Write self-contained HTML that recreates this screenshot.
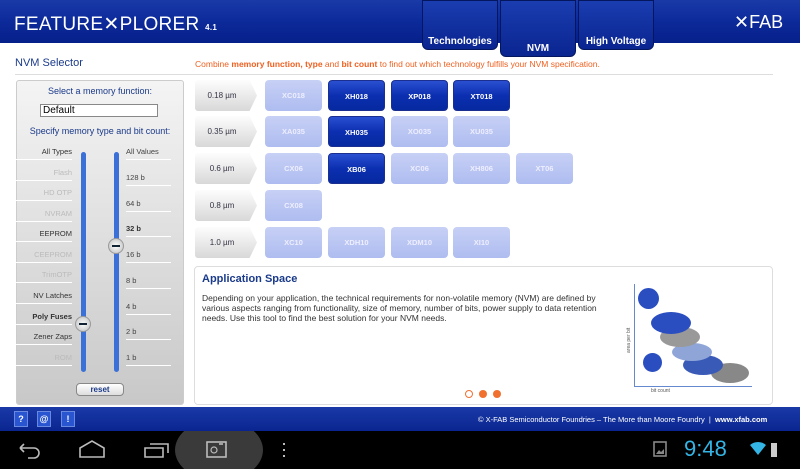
<!DOCTYPE html>
<html><head><style>
*{margin:0;padding:0;box-sizing:border-box}
body{width:800px;height:469px;overflow:hidden;background:#fff;font-family:"Liberation Sans",sans-serif;position:relative}
.a{position:absolute}
.hdr{left:0;top:0;width:800px;height:43px;background:linear-gradient(#1a3aa8,#0d2a9a 50%,#06208a)}
.tab{top:0;height:50px;background:linear-gradient(#1a3db0,#0a2590);border-radius:0 0 6px 6px;color:#fff;font-weight:bold;font-size:10px;text-align:center;border:1px solid #04175e}
.chip{width:57px;height:31px;border-radius:4px;color:#fff;font-size:7.5px;font-weight:bold;text-align:center;line-height:31px}
.d{background:linear-gradient(#2a4fd0,#0b2fb0 50%,#0629a0);border:1px solid #1a2f90}
.l{background:linear-gradient(#c7d0f5,#aebcf0);color:#eef}
.lbl{left:195px;width:62px;height:31px;font-size:8px;color:#334;line-height:31px;text-align:center;padding-right:8px;background:linear-gradient(#fdfdfd,#d8d8d8);clip-path:polygon(0 0,88% 0,100% 50%,88% 100%,0 100%);border-radius:3px}
.tl{font-size:7.5px;text-align:right;width:58px;left:14px;border-bottom:1px solid #fff;padding-bottom:3px}
.tr{font-size:7.5px;left:126px;width:45px;border-bottom:1px solid #fff;padding-bottom:3px;color:#444}
.g{color:#bbb}.k{color:#333}
.btn{top:411px;width:14px;height:16px;background:#2a55d0;border:1px solid #6a8ae0;color:#fff;font-size:9px;font-weight:bold;text-align:center;line-height:14px}
</style></head><body>
<div class="a hdr"></div>
<div class="a" style="left:14px;top:13px;color:#fff;font-size:19px;letter-spacing:0.3px">FEATURE<span>✕</span>PLORER <span style="font-size:8px;font-weight:bold">4.1</span></div>
<div class="a tab" style="left:422px;width:76px;padding-top:35px">Technologies</div>
<div class="a tab" style="left:500px;width:76px;height:57px;padding-top:42px">NVM</div>
<div class="a tab" style="left:578px;width:76px;padding-top:35px">High Voltage</div>
<div class="a" style="left:734px;top:12px;color:#fff;font-size:18px">✕FAB</div>
<div class="a" style="left:15px;top:57px;color:#1a3a8a;font-size:11px">NVM Selector</div>
<div class="a" style="left:195px;top:59px;color:#f06020;font-size:8.5px">Combine <b>memory function, type</b> and <b>bit count</b> to find out which technology fulfills your NVM specification.</div>
<div class="a" style="left:15px;top:74px;width:370px;height:1px;background:#ddd"></div>
<div class="a" style="left:195px;top:74px;width:578px;height:1px;background:#ddd"></div>
<div class="a" style="left:16px;top:80px;width:168px;height:325px;background:linear-gradient(#f4f4f4,#c8c8c8);border:1px solid #ccc;border-radius:3px"></div>
<div class="a" style="left:16px;top:86px;width:168px;text-align:center;font-size:9px;color:#1a3a8a">Select a memory function:</div>
<div class="a" style="left:40px;top:104px;width:118px;height:13px;background:#fff;border:1px solid #888;font-size:10px;padding-left:2px;line-height:12px">Default</div>
<div class="a" style="left:16px;top:126px;width:168px;text-align:center;font-size:9px;color:#1a3a8a">Specify memory type and bit count:</div>
<div class="a tl k" style="top:147px">All Types</div>
<div class="a tl g" style="top:168px">Flash</div>
<div class="a tl g" style="top:188px">HD OTP</div>
<div class="a tl g" style="top:209px">NVRAM</div>
<div class="a tl k" style="top:229px">EEPROM</div>
<div class="a tl g" style="top:250px">CEEPROM</div>
<div class="a tl g" style="top:270px">TrimOTP</div>
<div class="a tl k" style="top:291px">NV Latches</div>
<div class="a tl k" style="top:312px;font-weight:bold">Poly Fuses</div>
<div class="a tl k" style="top:332px">Zener Zaps</div>
<div class="a tl g" style="top:353px">ROM</div>
<div class="a tr" style="top:147px">All Values</div>
<div class="a tr" style="top:173px">128 b</div>
<div class="a tr" style="top:199px">64 b</div>
<div class="a tr" style="top:224px;font-weight:bold;color:#333">32 b</div>
<div class="a tr" style="top:250px">16 b</div>
<div class="a tr" style="top:276px">8 b</div>
<div class="a tr" style="top:302px">4 b</div>
<div class="a tr" style="top:327px">2 b</div>
<div class="a tr" style="top:353px">1 b</div>
<div class="a" style="left:81px;top:152px;width:5px;height:220px;background:#3a70d8;border-radius:3px"></div>
<div class="a" style="left:114px;top:152px;width:5px;height:220px;background:#3a70d8;border-radius:3px"></div>
<div class="a" style="left:75px;top:316px;width:16px;height:16px;border-radius:50%;background:radial-gradient(#fff,#bbb);border:1px solid #999"><div style="margin:6px 3px;height:2px;background:#123"></div></div>
<div class="a" style="left:108px;top:238px;width:16px;height:16px;border-radius:50%;background:radial-gradient(#fff,#bbb);border:1px solid #999"><div style="margin:6px 3px;height:2px;background:#123"></div></div>
<div class="a" style="left:76px;top:383px;width:48px;height:13px;border:1px solid #888;border-radius:4px;background:linear-gradient(#fff,#ddd);color:#1a3a8a;font-size:8px;font-weight:bold;text-align:center;line-height:11px">reset</div>

<div class="a lbl" style="top:80px">0.18 µm</div>
<div class="a lbl" style="top:116px">0.35 µm</div>
<div class="a lbl" style="top:153px">0.6 µm</div>
<div class="a lbl" style="top:190px">0.8 µm</div>
<div class="a lbl" style="top:227px">1.0 µm</div>

<div class="a chip l" style="left:265px;top:80px">XC018</div>
<div class="a chip d" style="left:328px;top:80px">XH018</div>
<div class="a chip d" style="left:391px;top:80px">XP018</div>
<div class="a chip d" style="left:453px;top:80px">XT018</div>
<div class="a chip l" style="left:265px;top:116px">XA035</div>
<div class="a chip d" style="left:328px;top:116px">XH035</div>
<div class="a chip l" style="left:391px;top:116px">XO035</div>
<div class="a chip l" style="left:453px;top:116px">XU035</div>
<div class="a chip l" style="left:265px;top:153px">CX06</div>
<div class="a chip d" style="left:328px;top:153px">XB06</div>
<div class="a chip l" style="left:391px;top:153px">XC06</div>
<div class="a chip l" style="left:453px;top:153px">XH806</div>
<div class="a chip l" style="left:516px;top:153px">XT06</div>
<div class="a chip l" style="left:265px;top:190px">CX08</div>
<div class="a chip l" style="left:265px;top:227px">XC10</div>
<div class="a chip l" style="left:328px;top:227px">XDH10</div>
<div class="a chip l" style="left:391px;top:227px">XDM10</div>
<div class="a chip l" style="left:453px;top:227px">XI10</div>

<div class="a" style="left:194px;top:266px;width:579px;height:139px;border:1px solid #ddd;border-radius:4px;background:#fff"></div>
<div class="a" style="left:202px;top:273px;color:#1a3a8a;font-size:11px;font-weight:bold">Application Space</div>
<div class="a" style="left:202px;top:293px;width:410px;font-size:8.5px;line-height:10px;color:#333">Depending on your application, the technical requirements for non-volatile memory (NVM) are defined by various aspects ranging from functionality, size of memory, number of bits, power supply to data retention needs. Use this tool to find the best solution for your NVM needs.</div>
<div class="a" style="left:634px;top:284px;width:1px;height:103px;background:#6688cc"></div>
<div class="a" style="left:634px;top:386px;width:118px;height:1px;background:#6688cc"></div>
<div class="a" style="left:651px;top:388px;font-size:5px;color:#555">bit count</div>
<div class="a" style="left:626px;top:353px;font-size:5px;color:#555;transform:rotate(-90deg);transform-origin:left top">area per bit</div>
<div class="a" style="left:711px;top:363px;width:38px;height:20px;border-radius:50%;background:#888"></div>
<div class="a" style="left:683px;top:355px;width:40px;height:20px;border-radius:50%;background:#3a5ab8"></div>
<div class="a" style="left:672px;top:343px;width:40px;height:18px;border-radius:50%;background:#8fa5d8"></div>
<div class="a" style="left:660px;top:327px;width:40px;height:20px;border-radius:50%;background:#999"></div>
<div class="a" style="left:651px;top:312px;width:40px;height:22px;border-radius:50%;background:#2a4ec0"></div>
<div class="a" style="left:638px;top:288px;width:21px;height:21px;border-radius:50%;background:#2a4ec0"></div>
<div class="a" style="left:643px;top:353px;width:19px;height:19px;border-radius:50%;background:#2a4ec0"></div>
<div class="a" style="left:465px;top:390px;width:8px;height:8px;border-radius:50%;border:1.5px solid #f07030"></div>
<div class="a" style="left:479px;top:390px;width:8px;height:8px;border-radius:50%;background:#f07030"></div>
<div class="a" style="left:493px;top:390px;width:8px;height:8px;border-radius:50%;background:#f07030"></div>

<div class="a" style="left:0;top:407px;width:800px;height:24px;background:linear-gradient(#1a3aa8,#0a2590)"></div>
<div class="a btn" style="left:14px">?</div>
<div class="a btn" style="left:37px">@</div>
<div class="a btn" style="left:61px">!</div>
<div class="a" style="left:478px;top:415px;color:#fff;font-size:7.5px">© X-FAB Semiconductor Foundries – The More than Moore Foundry &nbsp;| &nbsp;<b>www.xfab.com</b></div>
<div class="a" style="left:0;top:431px;width:800px;height:38px;background:#000;overflow:hidden">
 <div class="a" style="left:175px;top:-12px;width:88px;height:62px;border-radius:50%;background:#3a3a3a"></div>
 <svg class="a" style="left:0;top:0" width="800" height="38" fill="none" stroke="#bbb" stroke-width="1.6">
  <path d="M20 17 H34 a5 5 0 0 1 0 10 H28 M20 17 l4 -4 M20 17 l4 4"/>
  <path d="M80 26 V17 L92 10 L104 17 V26 Z"/>
  <path d="M150 13 H168 V22 M145 17 V26 H163 V17 Z"/>
  <rect x="207" y="11" width="19" height="15"/><circle cx="214" cy="19" r="3" stroke-width="1.2"/><path d="M219 13 h4"/>
  <path d="M284 12 v2 M284 18 v2 M284 24 v2" stroke-width="2"/>
  <rect x="654" y="11" width="12" height="14" stroke="#888"/><path d="M656 23 l3 -4 l2 2 l3 -3 v5 z" fill="#888" stroke="none"/>
  <path d="M750 14 l8 10 l8 -10 a12 12 0 0 0 -16 0z" fill="#33b5e5" stroke="none"/>
  <rect x="771" y="12" width="6" height="14" fill="#ccc" stroke="none"/>
 </svg>
 <div class="a" style="left:684px;top:5px;color:#33b5e5;font-size:22px">9:48</div>
</div>
</body></html>
